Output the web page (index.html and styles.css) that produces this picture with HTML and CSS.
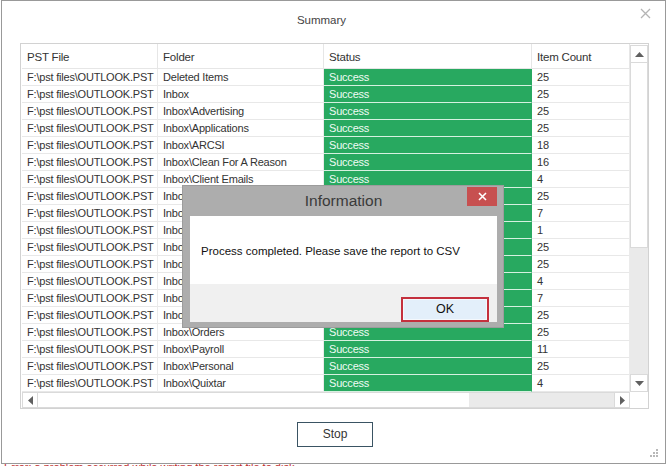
FILE: index.html
```html
<!DOCTYPE html>
<html lang="en">
<head>
    <meta charset="UTF-8">
    <title>Summary</title>
    <link rel="stylesheet" href="styles.css">
</head>
<body>
<div class="window">
    <div class="caption">Summary</div>
    <a href="#" class="close">
        <svg width="11" height="11" viewBox="0 0 11 11"><path d="M1 1L10 10M10 1L1 10" stroke="#b4b4b4" stroke-width="1.3"/></svg>
    </a>

    <div class="grid">
        <div class="table">
            <div class="row head">
                <div>PST File</div>
                <div>Folder</div>
                <div>Status</div>
                <div>Item Count</div>
            </div>
            <div class="row"><div>F:\pst files\OUTLOOK.PST</div><div>Deleted Items</div><div class="ok">Success</div><div>25</div></div>
            <div class="row"><div>F:\pst files\OUTLOOK.PST</div><div>Inbox</div><div class="ok">Success</div><div>25</div></div>
            <div class="row"><div>F:\pst files\OUTLOOK.PST</div><div>Inbox\Advertising</div><div class="ok">Success</div><div>25</div></div>
            <div class="row"><div>F:\pst files\OUTLOOK.PST</div><div>Inbox\Applications</div><div class="ok">Success</div><div>25</div></div>
            <div class="row"><div>F:\pst files\OUTLOOK.PST</div><div>Inbox\ARCSI</div><div class="ok">Success</div><div>18</div></div>
            <div class="row"><div>F:\pst files\OUTLOOK.PST</div><div>Inbox\Clean For A Reason</div><div class="ok">Success</div><div>16</div></div>
            <div class="row"><div>F:\pst files\OUTLOOK.PST</div><div>Inbox\Client Emails</div><div class="ok">Success</div><div>4</div></div>
            <div class="row"><div>F:\pst files\OUTLOOK.PST</div><div>Inbox\Conferences</div><div class="ok">Success</div><div>25</div></div>
            <div class="row"><div>F:\pst files\OUTLOOK.PST</div><div>Inbox\Deals</div><div class="ok">Success</div><div>7</div></div>
            <div class="row"><div>F:\pst files\OUTLOOK.PST</div><div>Inbox\Family</div><div class="ok">Success</div><div>1</div></div>
            <div class="row"><div>F:\pst files\OUTLOOK.PST</div><div>Inbox\Friends</div><div class="ok">Success</div><div>25</div></div>
            <div class="row"><div>F:\pst files\OUTLOOK.PST</div><div>Inbox\Invoices</div><div class="ok">Success</div><div>25</div></div>
            <div class="row"><div>F:\pst files\OUTLOOK.PST</div><div>Inbox\Marketing</div><div class="ok">Success</div><div>4</div></div>
            <div class="row"><div>F:\pst files\OUTLOOK.PST</div><div>Inbox\Meetings</div><div class="ok">Success</div><div>7</div></div>
            <div class="row"><div>F:\pst files\OUTLOOK.PST</div><div>Inbox\Newsletters</div><div class="ok">Success</div><div>25</div></div>
            <div class="row"><div>F:\pst files\OUTLOOK.PST</div><div>Inbox\Orders</div><div class="ok">Success</div><div>25</div></div>
            <div class="row"><div>F:\pst files\OUTLOOK.PST</div><div>Inbox\Payroll</div><div class="ok">Success</div><div>11</div></div>
            <div class="row"><div>F:\pst files\OUTLOOK.PST</div><div>Inbox\Personal</div><div class="ok">Success</div><div>25</div></div>
            <div class="row"><div>F:\pst files\OUTLOOK.PST</div><div>Inbox\Quixtar</div><div class="ok">Success</div><div>4</div></div>
        </div>

        <div class="vscroll">
            <div class="sbtn"><svg width="9" height="5" viewBox="0 0 9 5"><path d="M0 5L4.5 0L9 5Z" fill="#606060"/></svg></div>
            <div class="vthumb"></div>
            <div class="track"></div>
            <div class="sbtn"><svg width="9" height="5" viewBox="0 0 9 5"><path d="M0 0L4.5 5L9 0Z" fill="#606060"/></svg></div>
        </div>

        <div class="hscroll">
            <div class="sbtn"><svg width="5" height="9" viewBox="0 0 5 9"><path d="M5 0L0 4.5L5 9Z" fill="#606060"/></svg></div>
            <div class="hthumb"></div>
            <div class="track"></div>
            <div class="sbtn"><svg width="5" height="9" viewBox="0 0 5 9"><path d="M0 0L5 4.5L0 9Z" fill="#606060"/></svg></div>
        </div>
        <div class="corner"></div>
    </div>

    <div class="actions">
        <a href="#" class="btn">Stop</a>
    </div>

    <svg class="grip" width="9" height="9" viewBox="0 0 9 9">
        <rect x="7" y="1" width="2" height="2" fill="#b8b8b8"/>
        <rect x="4" y="4" width="2" height="2" fill="#b8b8b8"/>
        <rect x="7" y="4" width="2" height="2" fill="#b8b8b8"/>
        <rect x="1" y="7" width="2" height="2" fill="#b8b8b8"/>
        <rect x="4" y="7" width="2" height="2" fill="#b8b8b8"/>
        <rect x="7" y="7" width="2" height="2" fill="#b8b8b8"/>
    </svg>

    <!-- 弹出的提示框 -->
    <div class="dialog">
        <div class="dialog-title">
            Information
            <a href="#" class="dialog-close">
                <svg width="9" height="9" viewBox="0 0 9 9"><path d="M1 1L8 8M8 1L1 8" stroke="#fff" stroke-width="1.6"/></svg>
            </a>
        </div>
        <div class="dialog-body">Process completed. Please save the report to CSV</div>
        <div class="dialog-foot">
            <a href="#" class="ok-btn">OK</a>
        </div>
    </div>
</div>
<div class="behind">Error: a problem occurred while writing the report file to disk</div>
</body>
</html>
```

FILE: styles.css
```css
*{
    margin: 0;
    padding: 0;
    box-sizing: border-box;
}
html, body{
    width: 669px;
    height: 466px;
    overflow: hidden;
    background: #fff;
    font-family: "Liberation Sans", Arial, sans-serif;
    color: #333;
}
a{
    color: inherit;
    text-decoration: none;
}
.window{
    position: relative;
    width: 665px;
    height: 464px;
    margin-left: 1px;
    border: 1px solid #999;
    background: #fff;
}
.caption{
    height: 42px;
    padding: 13px 24px 0 0;
    text-align: center;
    font-size: 11.5px;
    color: #444;
}
.close{
    position: absolute;
    right: 14px;
    top: 7px;
    display: block;
    width: 11px;
    height: 11px;
}
.close svg{
    display: block;
}

/* 表格 */
.grid{
    display: grid;
    grid-template-columns: 608px 18px;
    grid-template-rows: 348px 16px;
    width: 629px;
    margin-left: 18px;
    padding-left: 1px;
    border: 1px solid #d2d2d2;
}
.table{
    overflow: hidden;
}
.row{
    display: grid;
    grid-template-columns: 136px 166px 208px 98px;
    height: 17px;
    font-size: 11px;
    letter-spacing: -0.2px;
    line-height: 17px;
}
.row div{
    padding-left: 5px;
    border-right: 1px solid #ebebeb;
    border-bottom: 1px solid #e8e8e8;
    white-space: nowrap;
    overflow: hidden;
}
.row .ok{
    background: #28a960;
    color: #f0fbf4;
    border-right-color: #28a960;
    border-bottom-color: #d6f1e0;
}
.row.head{
    height: 25px;
    line-height: 27px;
    font-size: 11.5px;
}
.row.head div{
    border-right-color: #e6e6e6;
    border-bottom-color: #e6e6e6;
}

/* 滚动条 */
.vscroll{
    display: flex;
    flex-direction: column;
    padding-top: 1px;
}
.sbtn{
    display: flex;
    align-items: center;
    justify-content: center;
    background: #fff;
    border: 1px solid #dadada;
}
.vscroll .sbtn{
    height: 18px;
}
.vthumb{
    height: 185px;
    background: #fff;
    border: 1px solid #dadada;
    border-top: 0;
}
.track{
    flex: 1;
    background: #eaeaea;
}
.hscroll{
    display: flex;
}
.hscroll .sbtn{
    width: 16px;
}
.hthumb{
    width: 431px;
    background: #fff;
    border-top: 1px solid #dadada;
    border-bottom: 1px solid #dadada;
}
.hscroll .track{
    border-top: 1px solid #dadada;
    border-bottom: 1px solid #dadada;
}
.corner{
    background: #fff;
}

.actions{
    display: flex;
    justify-content: center;
    padding: 13px 0 0 3px;
}
.btn{
    display: block;
    width: 76px;
    height: 25px;
    border: 1px solid #3a5463;
    text-align: center;
    font-size: 12px;
    line-height: 23px;
    color: #333;
}
.grip{
    position: absolute;
    right: 7px;
    bottom: 6px;
}

/* 提示框 */
.dialog{
    position: absolute;
    left: 180px;
    top: 184px;
    width: 322px;
    height: 143px;
    background: #adadad;
    padding: 0 6px 0 7px;
    border: 1px solid #9c9c9c;
}
.dialog-title{
    position: relative;
    height: 30px;
    line-height: 29px;
    text-align: center;
    font-size: 15.5px;
    color: #3a3a3a;
}
.dialog-close{
    position: absolute;
    right: 0;
    top: 1px;
    display: flex;
    align-items: center;
    justify-content: center;
    width: 30px;
    height: 19px;
    background: #c75050;
}
.dialog-body{
    height: 68px;
    background: #fff;
    padding: 29px 0 0 11px;
    font-size: 11.5px;
    color: #111;
}
.dialog-foot{
    display: flex;
    justify-content: flex-end;
    height: 38px;
    background: #f0f0f0;
    padding: 13px 8px 0 0;
}
.ok-btn{
    display: block;
    width: 88px;
    height: 25px;
    border: 2px solid #c4303d;
    box-shadow: inset 0 0 0 1px #f4f8fc;
    background: #e3effa;
    text-align: center;
    font-size: 12.5px;
    line-height: 21px;
    color: #111;
}
.behind{
    font-size: 11px;
    color: #c03030;
    line-height: 9px;
    margin-top: -1px;
    padding-left: 4px;
    white-space: nowrap;
}
```
